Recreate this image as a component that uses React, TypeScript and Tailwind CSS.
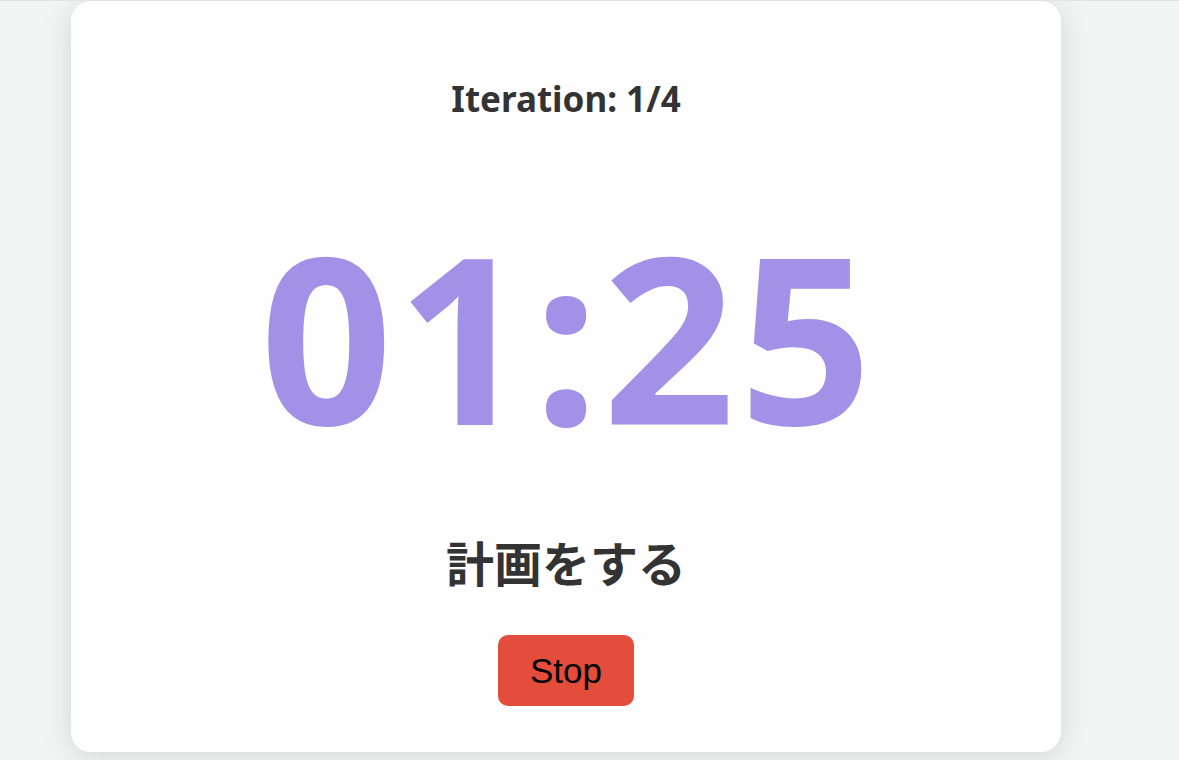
import React from 'react';

const App: React.FC = () => {
  const iteration = 1;
  const total = 4;
  const time = '01:25';
  const phase = '計画をする';

  return (
    <div className="min-h-screen bg-[#f3f4f4] border-t border-[#e3e3e3] overflow-hidden">
      {/* Timer card */}
      <div className="ml-[71px] w-[990px] bg-[#fefefe] rounded-[20px] shadow-[0_4px_30px_rgba(0,0,0,0.13)] flex flex-col items-center pt-[77px] pb-[46px]">
        <h2 className="text-[35px] leading-[42px] font-bold text-[#333333] font-['Noto_Sans',sans-serif]">
          Iteration: {iteration}/{total}
        </h2>

        <div className="mt-[99px] pl-[4px] text-[232px] leading-[232px] tracking-[4px] font-bold text-[#a192e8] font-['Noto_Sans',sans-serif]">
          {time}
        </div>

        <h3 className="mt-[81px] text-[48px] leading-[58px] font-bold text-[#333333] font-['Noto_Sans_CJK_JP',sans-serif]">
          {phase}
        </h3>

        <button className="mt-[45px] bg-[#e44c3c] text-black rounded-[10px] px-8 py-4 text-[35px] leading-[39px] font-['Liberation_Sans',Arial,sans-serif] cursor-pointer">
          Stop
        </button>
      </div>
    </div>
  );
};

export default App;
